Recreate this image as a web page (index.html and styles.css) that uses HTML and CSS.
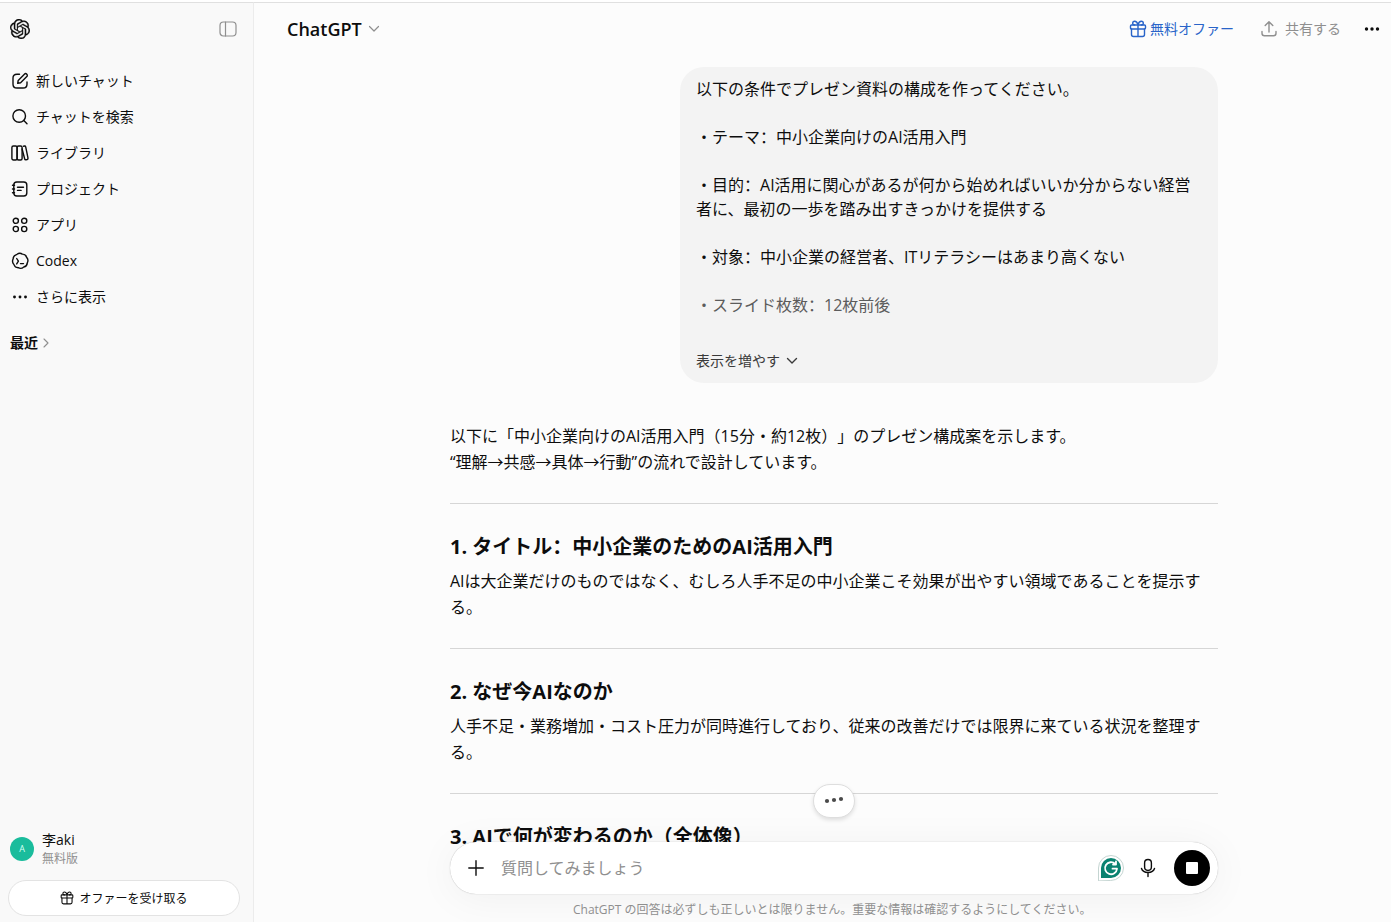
FILE: index.html
```html
<!DOCTYPE html>
<html lang="zh-CN">
<head>
    <meta charset="UTF-8">
    <meta name="viewport" content="width=device-width, initial-scale=1.0">
    <title>ChatGPT</title>
    <link rel="stylesheet" href="styles.css">
</head>
<body>

    <aside class="sidebar">
        <div class="sidebar-top">
            <svg class="logo" width="20" height="20" viewBox="0 0 24 24" fill="currentColor"><path d="M22.2819 9.8211a5.9847 5.9847 0 0 0-.5157-4.9108 6.0462 6.0462 0 0 0-6.5098-2.9A6.0651 6.0651 0 0 0 4.9807 4.1818a5.9847 5.9847 0 0 0-3.9977 2.9 6.0462 6.0462 0 0 0 .7427 7.0966 5.98 5.98 0 0 0 .511 4.9107 6.051 6.051 0 0 0 6.5146 2.9001A5.9847 5.9847 0 0 0 13.2599 24a6.0557 6.0557 0 0 0 5.7718-4.2058 5.9894 5.9894 0 0 0 3.9977-2.9001 6.0557 6.0557 0 0 0-.7475-7.0729zm-9.022 12.6081a4.4755 4.4755 0 0 1-2.8764-1.0408l.1419-.0804 4.7783-2.7582a.7948.7948 0 0 0 .3927-.6813v-6.7369l2.02 1.1686a.071.071 0 0 1 .038.052v5.5826a4.504 4.504 0 0 1-4.4945 4.4944zm-9.6607-4.1254a4.4708 4.4708 0 0 1-.5346-3.0137l.142.0852 4.783 2.7582a.7712.7712 0 0 0 .7806 0l5.8428-3.3685v2.3324a.0804.0804 0 0 1-.0332.0615L9.74 19.9502a4.4992 4.4992 0 0 1-6.1408-1.6464zM2.3408 7.8956a4.485 4.485 0 0 1 2.3655-1.9728V11.6a.7664.7664 0 0 0 .3879.6765l5.8144 3.3543-2.0201 1.1685a.0757.0757 0 0 1-.071 0l-4.8303-2.7865A4.504 4.504 0 0 1 2.3408 7.872zm16.5963 3.8558L13.1038 8.364 15.1192 7.2a.0757.0757 0 0 1 .071 0l4.8303 2.7913a4.4944 4.4944 0 0 1-.6765 8.1042v-5.6772a.79.79 0 0 0-.407-.667zm2.0107-3.0231l-.142-.0852-4.7735-2.7818a.7759.7759 0 0 0-.7854 0L9.409 9.2297V6.8974a.0662.0662 0 0 1 .0284-.0615l4.8303-2.7866a4.4992 4.4992 0 0 1 6.6802 4.66zM8.3065 12.863l-2.02-1.1638a.0804.0804 0 0 1-.038-.0567V6.0742a4.4992 4.4992 0 0 1 7.3757-3.4537l-.142.0805L8.704 5.459a.7948.7948 0 0 0-.3927.6813zm1.0976-2.3654l2.602-1.4998 2.6069 1.4998v2.9994l-2.5974 1.4997-2.6067-1.4997Z"/></svg>
            <svg class="toggle" width="18" height="18" viewBox="0 0 18 18"><rect x="1" y="2" width="16" height="14" rx="3.5"/><path d="M6.5 2v14"/></svg>
        </div>

        <nav class="menu">
            <a class="menu-item">
                <svg width="18" height="18" viewBox="0 0 18 18"><path d="M8.5 2.2H6Q2 2.2 2 6v6.2Q2 16 6 16h6q4 0 4-3.8V10"/><path d="M6.7 11.3l.5-2.9 6.2-6.2a1.6 1.6 0 0 1 2.4 2.4L9.6 10.8z"/></svg>
                <span class="label">新しいチャット</span>
            </a>
            <a class="menu-item">
                <svg width="18" height="18" viewBox="0 0 18 18"><circle cx="8.2" cy="8" r="6.3"/><path d="M12.8 12.6L16 15.8"/></svg>
                <span class="label">チャットを検索</span>
            </a>
            <a class="menu-item">
                <svg width="18" height="18" viewBox="0 0 18 18"><rect x=".9" y="2" width="5.2" height="14" rx="1.5"/><rect x="6.1" y="2" width="5" height="14" rx="1.5"/><path d="M12.5 2.2l1-.2q1-.1 1.2.8l2.3 11.4q.1 1-.8 1.3l-1.3.3q-1 .1-1.2-.8L11.1 5"/></svg>
                <span class="label">ライブラリ</span>
            </a>
            <a class="menu-item">
                <svg width="18" height="18" viewBox="0 0 18 18"><rect x="2.8" y="2" width="13" height="14" rx="3"/><path d="M6.5 7.2h6M6.5 10.4h3.6M1.5 5.2h2M1.5 9h2M1.5 12.8h2"/></svg>
                <span class="label">プロジェクト</span>
            </a>
            <a class="menu-item">
                <svg width="18" height="18" viewBox="0 0 18 18"><circle cx="4.8" cy="4.8" r="2.6"/><circle cx="13.2" cy="4.8" r="2.6"/><circle cx="4.8" cy="13" r="2.6"/><circle cx="13.2" cy="13" r="2.6"/></svg>
                <span class="label">アプリ</span>
            </a>
            <a class="menu-item">
                <svg width="18" height="18" viewBox="0 0 18 18"><path d="M6 2.3q2.8-2 5.3-.2 3.5-.1 4.3 3.2 2.3 2.7.7 5.6-.2 3.4-3.5 4.1-2.7 2.4-5.5.7-3.3.1-4.3-3.1Q.6 9.9 2.1 7 2.3 3.5 6 2.3z"/><path d="M5.7 6.5l1.7 2.7-1.7 2.7M9.5 11.6h3"/></svg>
                <span class="label">Codex</span>
            </a>
            <a class="menu-item">
                <svg width="18" height="18" viewBox="0 0 18 18"><g class="dots"><circle cx="3.5" cy="9" r="1.45"/><circle cx="9" cy="9" r="1.45"/><circle cx="14.5" cy="9" r="1.45"/></g></svg>
                <span class="label">さらに表示</span>
            </a>
        </nav>

        <div class="recent">
            <span class="label">最近</span>
            <svg width="8" height="10" viewBox="0 0 8 10"><path d="M2 1l4 4-4 4"/></svg>
        </div>

        <div class="account">
            <div class="avatar">A</div>
            <div>
                <div class="user-name">李aki</div>
                <div class="user-plan">無料版</div>
            </div>
        </div>
        <button class="offer-button">
            <svg width="14" height="14" viewBox="0 0 18 18"><rect x="1.5" y="5" width="15" height="4" rx="1"/><path d="M2.5 9v5.5q0 2 2 2h9q2 0 2-2V9M9 5v11.5M9 5Q8 1.3 5.7 1.3 3.7 1.3 3.7 3.2 3.7 5 5.7 5M9 5q1-3.7 3.3-3.7 2 0 2 1.9 0 1.8-2 1.8"/></svg>
            オファーを受け取る
        </button>
    </aside>

    <main class="main">
        <header class="header">
            <div class="model">
                ChatGPT
                <svg width="12" height="8" viewBox="0 0 12 8"><path d="M1.5 1.5L6 6l4.5-4.5"/></svg>
            </div>
            <div class="actions">
                <a class="free-offer">
                    <svg width="18" height="18" viewBox="0 0 18 18"><rect x="1.5" y="5" width="15" height="4" rx="1"/><path d="M2.5 9v5.5q0 2 2 2h9q2 0 2-2V9M9 5v11.5M9 5Q8 1.3 5.7 1.3 3.7 1.3 3.7 3.2 3.7 5 5.7 5M9 5q1-3.7 3.3-3.7 2 0 2 1.9 0 1.8-2 1.8"/></svg>
                    <span class="label">無料オファー</span>
                </a>
                <a class="share">
                    <svg width="18" height="18" viewBox="0 0 18 18"><path d="M9 12V2M5.2 5.6L9 1.8l3.8 3.8M2 11.5v1.7q0 2.5 2.5 2.5h9q2.5 0 2.5-2.5v-1.7"/></svg>
                    <span class="label">共有する</span>
                </a>
                <svg class="more" width="18" height="18" viewBox="0 0 18 18"><g class="dots"><circle cx="3.5" cy="9" r="1.7"/><circle cx="9" cy="9" r="1.7"/><circle cx="14.5" cy="9" r="1.7"/></g></svg>
            </div>
        </header>

        <div class="thread">
            <div class="bubble">
                <p>以下の条件でプレゼン資料の構成を作ってください。</p>
                <p><span class="cjk">・</span>テーマ：中小企業向けのAI活用入門</p>
                <p><span class="cjk">・</span>目的：AI活用に関心があるが何から始めればいいか分からない経営<br>者に、最初の一歩を踏み出すきっかけを提供する</p>
                <p><span class="cjk">・</span>対象：中小企業の経営者、ITリテラシーはあまり高くない</p>
                <p class="faded"><span class="cjk">・</span>スライド枚数：12枚前後</p>
                <div class="show-more">
                    表示を増やす
                    <svg width="12" height="8" viewBox="0 0 12 8"><path d="M1.5 1.5L6 6l4.5-4.5"/></svg>
                </div>
            </div>

            <div class="answer">
                <p>以下に「中小企業向けのAI活用入門（15分<span class="cjk">・</span>約12枚）」のプレゼン構成案を示します。<br>“理解→共感→具体→行動”の流れで設計しています。</p>
                <hr>
                <h3>1. タイトル：中小企業のためのAI活用入門</h3>
                <p>AIは大企業だけのものではなく、むしろ人手不足の中小企業こそ効果が出やすい領域であることを提示す<br>る。</p>
                <hr>
                <h3>2. なぜ今AIなのか</h3>
                <p>人手不足<span class="cjk">・</span>業務増加<span class="cjk">・</span>コスト圧力が同時進行しており、従来の改善だけでは限界に来ている状況を整理す<br>る。</p>
                <hr>
                <h3>3. AIで何が変わるのか（全体像）</h3>
            </div>
        </div>

        <div class="bottom">
            <button class="scroll-button">
                <svg width="20" height="10" viewBox="0 0 20 10"><circle cx="3" cy="6" r="2.1"/><circle cx="10" cy="5" r="2.1"/><circle cx="17" cy="4" r="2.1"/></svg>
            </button>
            <div class="composer">
                <svg class="plus" width="16" height="16" viewBox="0 0 16 16"><path d="M8 .8v14.4M.8 8h14.4"/></svg>
                <span class="placeholder">質問してみましょう</span>
                <svg class="grammar" width="26" height="26" viewBox="0 0 26 26"><path class="ring" d="M.5 25.5V13A12.5 12.5 0 1 1 13 25.5z"/><path class="disc" d="M3 23V13a10 10 0 1 1 10 10z"/><path class="arc" d="M17.3 9a6 6 0 1 0 1.7 4.700h-4.500M18 6.300v3.300h-3"/></svg>
                <svg class="mic" width="16" height="20" viewBox="0 0 16 20"><rect x="4.6" y="1.5" width="6.8" height="11" rx="3.4"/><path d="M1.5 10.5a6.7 5.2 0 0 0 13 0M8 14.7v3.8"/></svg>
                <div class="stop"><div class="stop-square"></div></div>
            </div>
            <div class="note">ChatGPT の回答は必ずしも正しいとは限りません。重要な情報は確認するようにしてください。</div>
        </div>
    </main>

</body>
</html>
```

FILE: styles.css
```css
* {
    box-sizing: border-box;
}

body {
    margin: 0;
    height: 922px;
    display: flex;
    overflow: hidden;
    border-top: 2px solid #fff;
    background-color: #fcfcfc;
    color: #0d0d0d;
    font-family: "Open Sans", "Noto Sans CJK SC", sans-serif;
    font-size: 16px;
    text-spacing-trim: space-all;
}

p, h3 {
    margin: 0;
    white-space: nowrap;
}

svg {
    display: block;
    flex-shrink: 0;
    fill: none;
    stroke: currentColor;
    stroke-width: 1.4;
    stroke-linecap: round;
    stroke-linejoin: round;
}

.dots {
    fill: currentColor;
    stroke: none;
}

/* full-width middle dot */
.cjk {
    font-family: "Noto Sans CJK SC", sans-serif;
    line-height: 1;
}

.label {
    padding-bottom: 2px;
}

.sidebar {
    width: 254px;
    flex-shrink: 0;
    display: flex;
    flex-direction: column;
    background-color: #f9f9f9;
    border-top: 1px solid #e0e0e0;
    border-right: 1px solid #ececec;
    font-size: 14px;
}

.sidebar-top {
    display: flex;
    justify-content: space-between;
    align-items: center;
    height: 52px;
    padding: 0 16px 0 10px;
}

.logo {
    fill: currentColor;
    stroke: currentColor;
    stroke-width: 0.3;
}

.toggle {
    color: #8f8f8f;
    stroke-width: 1.2;
}

.menu {
    padding-top: 8px;
}

.menu-item {
    display: flex;
    align-items: center;
    gap: 7px;
    height: 36px;
    padding-left: 11px;
}

.recent {
    display: flex;
    align-items: center;
    gap: 4px;
    height: 36px;
    margin-top: 10px;
    padding-left: 10px;
    font-weight: bold;
}

.recent svg {
    color: #8f8f8f;
    stroke-width: 1.1;
}

.account {
    display: flex;
    align-items: center;
    gap: 8px;
    margin-top: auto;
    padding-left: 10px;
}

.avatar {
    width: 24px;
    height: 24px;
    border-radius: 50%;
    background-color: #1abc9c;
    color: #d9fff5;
    font-size: 9px;
    line-height: 24px;
    text-align: center;
}

.user-name {
    height: 20px;
    line-height: 18px;
}

.user-plan {
    color: #8f8f8f;
    font-size: 12px;
    line-height: 16px;
}

.offer-button {
    display: flex;
    align-items: center;
    justify-content: center;
    gap: 5px;
    width: 232px;
    height: 36px;
    margin: 13px 0 6px 8px;
    padding: 0;
    background-color: #fff;
    border: 1px solid #e3e3e3;
    border-radius: 18px;
    color: #0d0d0d;
    font-family: inherit;
    font-size: 12px;
}

.main {
    position: relative;
    flex: 1;
    border-top: 1px solid #e0e0e0;
}

.header {
    display: flex;
    justify-content: space-between;
    align-items: center;
    height: 52px;
    padding: 0 10px 0 33px;
}

.model {
    display: flex;
    align-items: center;
    gap: 6px;
    font-size: 18px;
    font-weight: 600;
}

.model svg {
    color: #8f8f8f;
    stroke-width: 1.2;
}

.actions {
    display: flex;
    align-items: center;
    font-size: 14px;
}

.free-offer {
    display: flex;
    align-items: center;
    gap: 3px;
    color: #2964c9;
}

.share {
    display: flex;
    align-items: center;
    gap: 7px;
    margin-left: 26px;
    color: #8f8f8f;
}

.more {
    margin-left: 22px;
}

.thread {
    width: 768px;
    margin-left: 196px;
    padding-top: 12px;
}

.bubble {
    width: 538px;
    height: 316px;
    margin-left: auto;
    padding: 10px 16px;
    background-color: #f3f3f3;
    border-radius: 24px;
    line-height: 24px;
}

.bubble p {
    margin-bottom: 24px;
}

.bubble .faded {
    margin-bottom: 32px;
    color: #5c5c5c;
}

.show-more {
    display: flex;
    align-items: center;
    gap: 6px;
    color: #3a3a3a;
    font-size: 14px;
}

.answer {
    padding-top: 40px;
    line-height: 26px;
}

.answer hr {
    height: 1px;
    margin: 28px 0;
    border: 0;
    background-color: #d6d6d6;
}

.answer h3 {
    padding-top: 1px;
    margin-bottom: 7px;
    font-size: 20px;
    font-weight: bold;
    line-height: 28px;
}

/* floats over the thread */
.bottom {
    position: absolute;
    left: 196px;
    bottom: 0;
    width: 768px;
}

.scroll-button {
    display: flex;
    align-items: center;
    justify-content: center;
    width: 42px;
    height: 34px;
    margin: 0 auto 24px;
    padding: 0 0 2px;
    background-color: #fff;
    border: 1px solid #dedede;
    border-radius: 17px;
    box-shadow: 0 2px 4px rgba(0, 0, 0, 0.12);
    color: #4a4a4a;
}

.scroll-button svg {
    fill: currentColor;
    stroke: none;
}

.composer {
    display: flex;
    align-items: center;
    height: 52px;
    padding: 0 8px 0 18px;
    background-color: #fff;
    border-radius: 26px;
    box-shadow: 0 0 1px rgba(0, 0, 0, 0.35), 0 4px 40px rgba(0, 0, 0, 0.05);
}

.placeholder {
    flex: 1;
    margin-left: 17px;
    padding-bottom: 2px;
    color: #8f8f8f;
}

.grammar {
    stroke: none;
}

.grammar .ring {
    fill: #fff;
    stroke: #c5d5d2;
    stroke-width: 1;
}

.grammar .disc {
    fill: #0a8270;
}

.grammar .arc {
    stroke: #fff;
    stroke-width: 1.8;
}

.mic {
    margin: 0 18px 0 16px;
}

.stop {
    display: flex;
    align-items: center;
    justify-content: center;
    width: 36px;
    height: 36px;
    border-radius: 50%;
    background-color: #000;
}

.stop-square {
    width: 12px;
    height: 12px;
    border-radius: 1px;
    background-color: #fff;
}

.note {
    height: 28px;
    padding-left: 123px;
    color: #8f8f8f;
    font-size: 12px;
    line-height: 31px;
    white-space: nowrap;
}
```
